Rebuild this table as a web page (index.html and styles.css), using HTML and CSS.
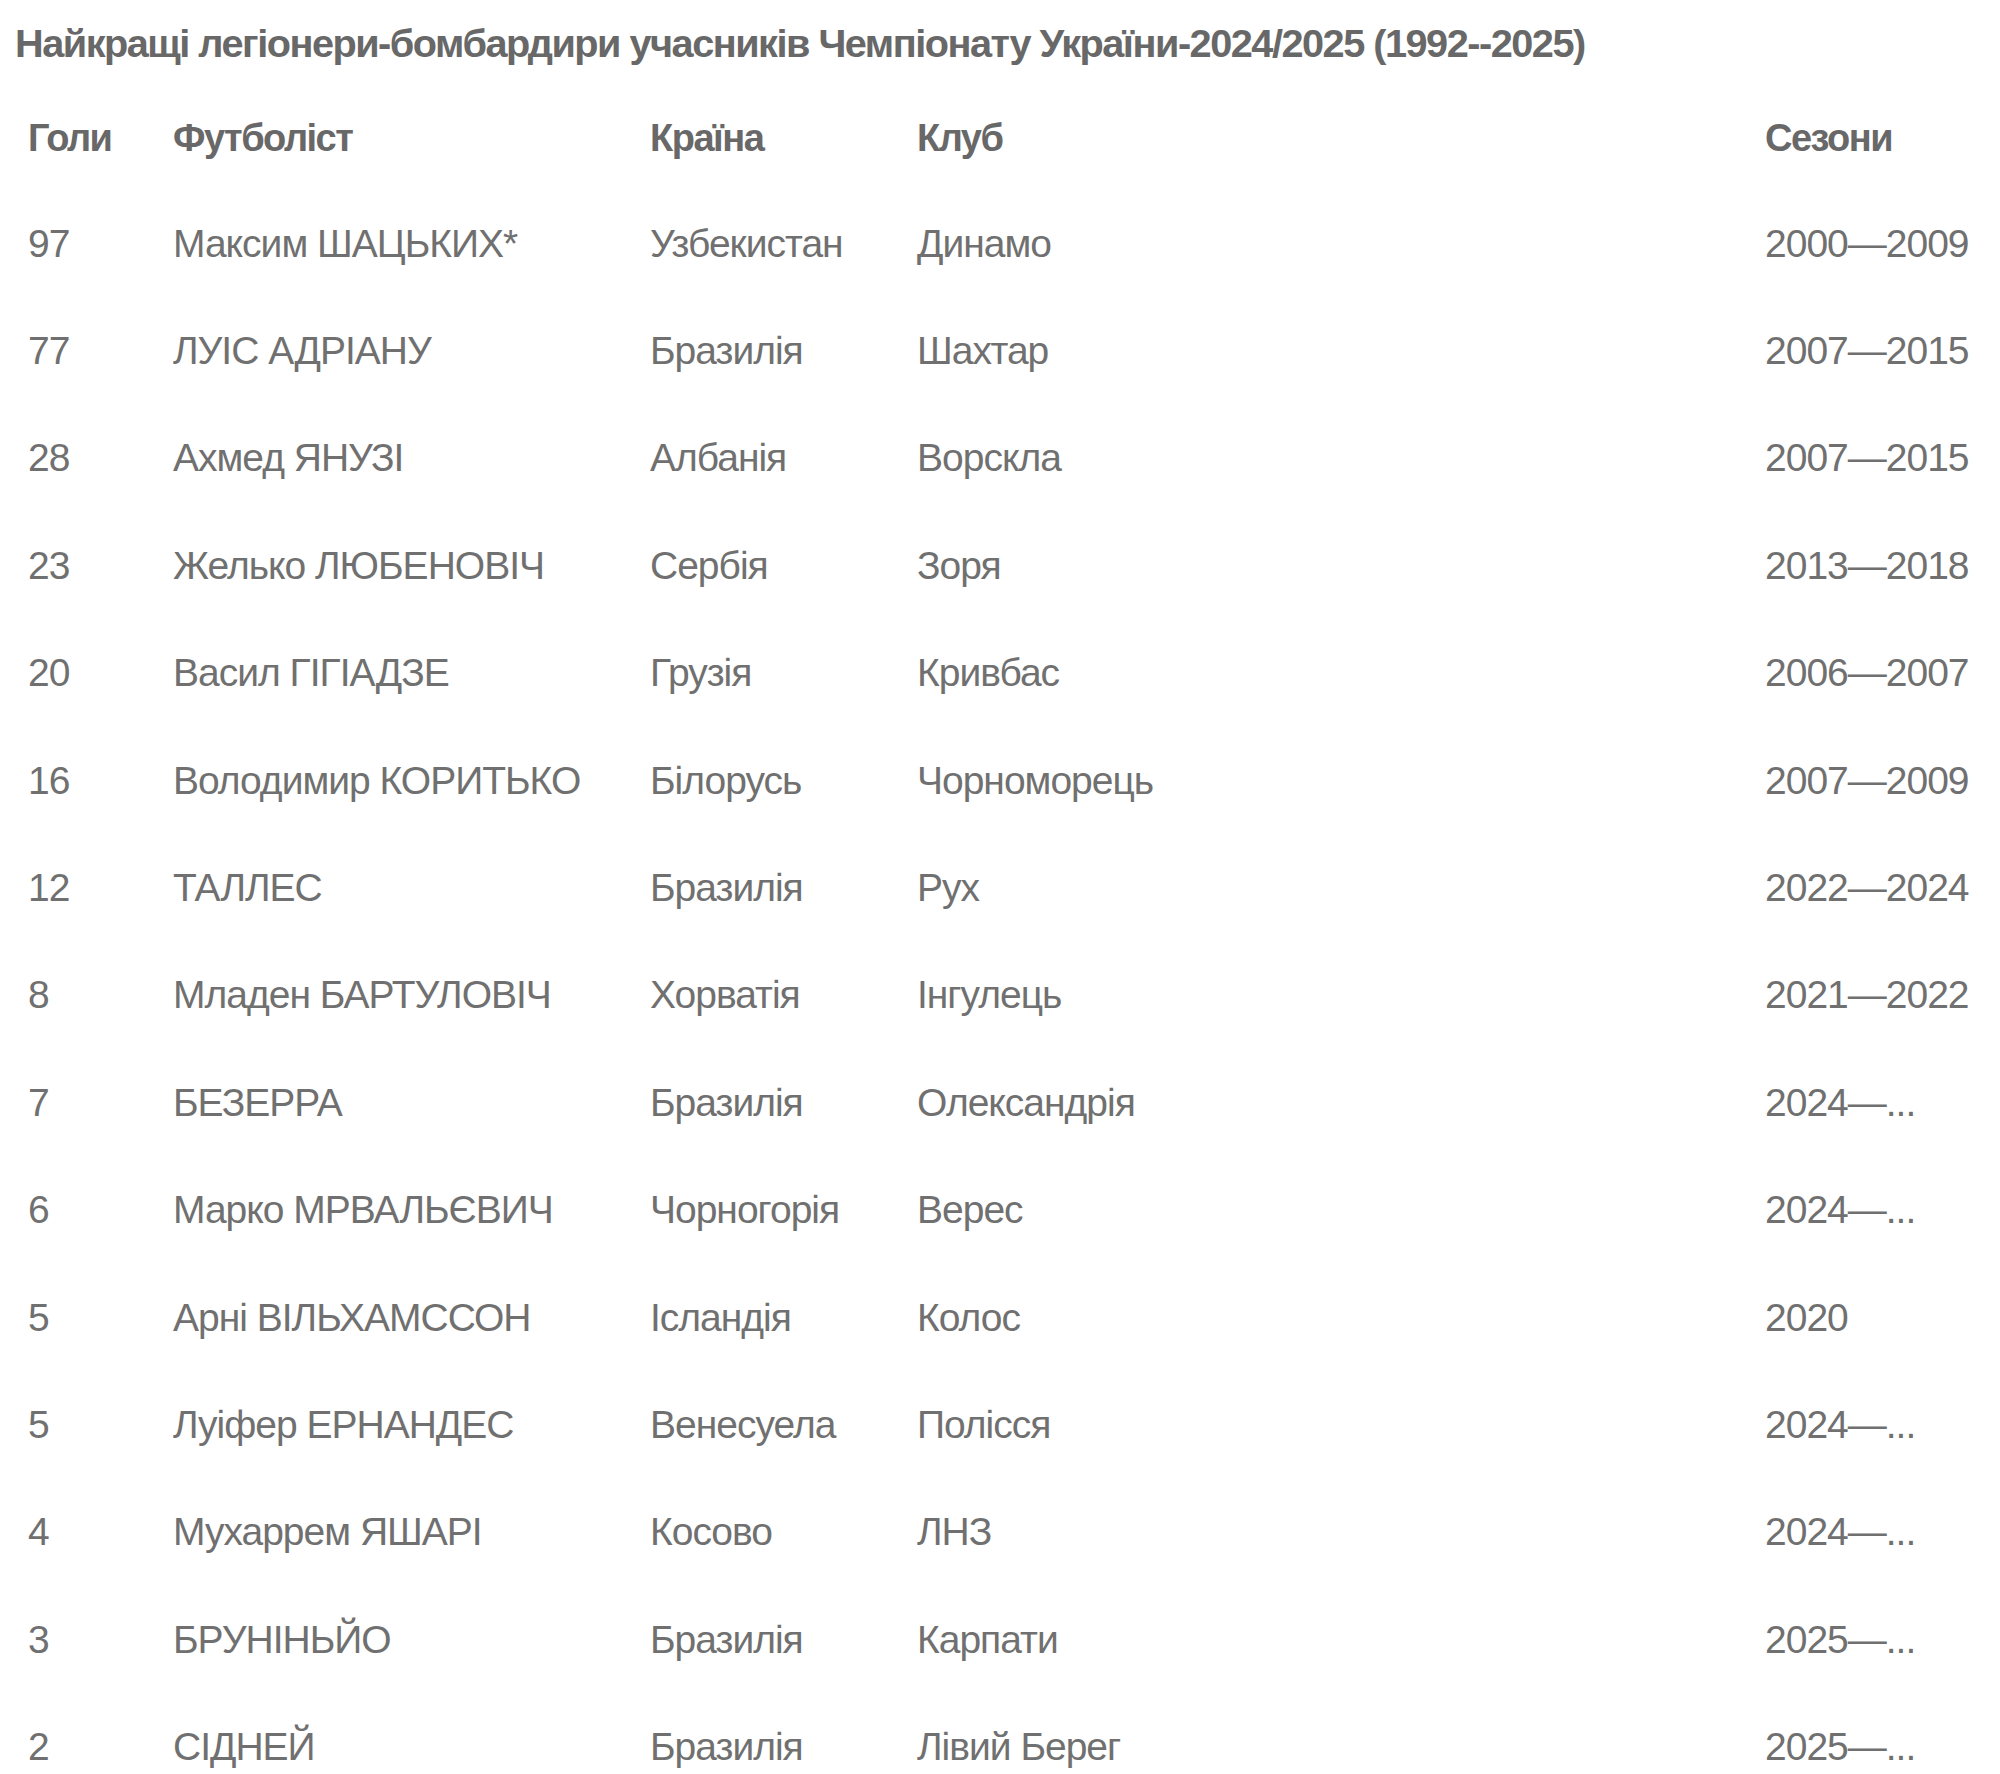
FILE: index.html
```html
<!DOCTYPE html>
<html lang="uk">
<head>
<meta charset="utf-8">
<title>Найкращі легіонери-бомбардири</title>
<link rel="stylesheet" href="styles.css">
</head>
<body>
<div class="page">
  <h1 class="title">Найкращі легіонери-бомбардири учасників Чемпіонату України-2024/2025 (1992--2025)</h1>
  <div class="table">
    <div class="row head">
      <div class="cell">Голи</div>
      <div class="cell">Футболіст</div>
      <div class="cell">Країна</div>
      <div class="cell">Клуб</div>
      <div class="cell">Сезони</div>
    </div>
    <div class="row"><div class="cell">97</div><div class="cell">Максим ШАЦЬКИХ*</div><div class="cell">Узбекистан</div><div class="cell">Динамо</div><div class="cell">2000—2009</div></div>
    <div class="row"><div class="cell">77</div><div class="cell">ЛУІС АДРІАНУ</div><div class="cell">Бразилія</div><div class="cell">Шахтар</div><div class="cell">2007—2015</div></div>
    <div class="row"><div class="cell">28</div><div class="cell">Ахмед ЯНУЗІ</div><div class="cell">Албанія</div><div class="cell">Ворскла</div><div class="cell">2007—2015</div></div>
    <div class="row"><div class="cell">23</div><div class="cell">Желько ЛЮБЕНОВІЧ</div><div class="cell">Сербія</div><div class="cell">Зоря</div><div class="cell">2013—2018</div></div>
    <div class="row"><div class="cell">20</div><div class="cell">Васил ГІГІАДЗЕ</div><div class="cell">Грузія</div><div class="cell">Кривбас</div><div class="cell">2006—2007</div></div>
    <div class="row"><div class="cell">16</div><div class="cell">Володимир КОРИТЬКО</div><div class="cell">Білорусь</div><div class="cell">Чорноморець</div><div class="cell">2007—2009</div></div>
    <div class="row"><div class="cell">12</div><div class="cell">ТАЛЛЕС</div><div class="cell">Бразилія</div><div class="cell">Рух</div><div class="cell">2022—2024</div></div>
    <div class="row"><div class="cell">8</div><div class="cell">Младен БАРТУЛОВІЧ</div><div class="cell">Хорватія</div><div class="cell">Інгулець</div><div class="cell">2021—2022</div></div>
    <div class="row"><div class="cell">7</div><div class="cell">БЕЗЕРРА</div><div class="cell">Бразилія</div><div class="cell">Олександрія</div><div class="cell">2024—...</div></div>
    <div class="row"><div class="cell">6</div><div class="cell">Марко МРВАЛЬЄВИЧ</div><div class="cell">Чорногорія</div><div class="cell">Верес</div><div class="cell">2024—...</div></div>
    <div class="row"><div class="cell">5</div><div class="cell">Арні ВІЛЬХАМССОН</div><div class="cell">Ісландія</div><div class="cell">Колос</div><div class="cell">2020</div></div>
    <div class="row"><div class="cell">5</div><div class="cell">Луіфер ЕРНАНДЕС</div><div class="cell">Венесуела</div><div class="cell">Полісся</div><div class="cell">2024—...</div></div>
    <div class="row"><div class="cell">4</div><div class="cell">Мухаррем ЯШАРІ</div><div class="cell">Косово</div><div class="cell">ЛНЗ</div><div class="cell">2024—...</div></div>
    <div class="row"><div class="cell">3</div><div class="cell">БРУНІНЬЙО</div><div class="cell">Бразилія</div><div class="cell">Карпати</div><div class="cell">2025—...</div></div>
    <div class="row"><div class="cell">2</div><div class="cell">СІДНЕЙ</div><div class="cell">Бразилія</div><div class="cell">Лівий Берег</div><div class="cell">2025—...</div></div>
  </div>
</div>
</body>
</html>
```
FILE: styles.css
```css
html, body {
  margin: 0;
  padding: 0;
  background: #ffffff;
}

body {
  font-family: "Liberation Sans", Arial, sans-serif;
  color: #707070;
}

.page {
  padding: 20px 15px 0 15px;
}

.title {
  margin: 0 0 19px 0;
  font-size: 39.7px;
  line-height: 46px;
  letter-spacing: -1.5px;
  font-weight: 700;
  color: #686868;
  white-space: nowrap;
}

.table {
  display: flex;
  flex-direction: column;
}

.row {
  display: grid;
  grid-template-columns: 145px 477px 267px 848px 1fr;
  height: 107.4px;
  align-items: center;
}

.row.head {
  height: 105px;
}

.cell {
  padding-left: 13px;
  font-size: 39px;
  line-height: 46px;
  letter-spacing: -1px;
  white-space: nowrap;
}

.head .cell {
  font-weight: 700;
  font-size: 38px;
  letter-spacing: -1.5px;
  color: #686868;
}
```
